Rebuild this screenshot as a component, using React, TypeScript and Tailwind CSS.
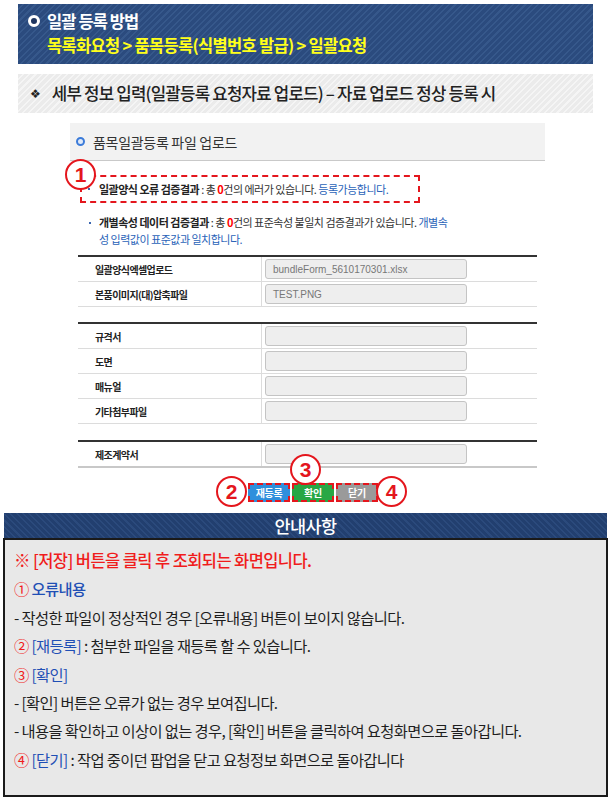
import React from "react";

function Marker({ n, className }: { n: string; className: string }) {
  return (
    <div
      className={
        "absolute w-[31px] h-[31px] rounded-full border-[2.5px] border-[#e4161d] bg-white flex items-center justify-center text-[#e4161d] text-[21px] font-bold leading-none font-['Liberation_Sans',sans-serif] " +
        className
      }
    >
      {n}
    </div>
  );
}

function Row({ label, value, last }: { label: string; value?: string; last?: boolean }) {
  return (
    <div
      className={
        last
          ? "grid grid-cols-[184px_1fr] h-[26px] border-b-2 border-[#c8c8c8]"
          : "grid grid-cols-[184px_1fr] h-[25px] border-b border-[#dcdcdc]"
      }
    >
      <div className="border-r border-[#dcdcdc] flex items-center pl-[17px] text-[10px] font-bold tracking-[-0.6px] text-[#222]">
        {label}
      </div>
      <div className="flex items-center pl-[3px]">
        <div className="w-[202px] h-[20px] rounded-[3px] border border-[#c4c4c4] bg-[#eeeeee] flex items-center pl-[7px] text-[10px] text-[#777] font-['Liberation_Sans',sans-serif]">
          {value}
        </div>
      </div>
    </div>
  );
}

function Btn({ label, className }: { label: string; className: string }) {
  return (
    <div
      className={
        "w-[42px] h-[19px] border-2 border-dashed border-[#e4161d] flex items-center justify-center text-white text-[10px] font-bold tracking-[-0.3px] leading-none " +
        className
      }
    >
      {label}
    </div>
  );
}

export default function App() {
  return (
    <div className="relative w-[611px] h-[800px] bg-white overflow-hidden font-['Noto_Sans_CJK_KR','Noto_Sans',sans-serif] text-[#222]">
      {/* top title bar */}
      <div className="ml-[18px] mt-[4px] w-[575px] h-[60px] pt-[8px] bg-[repeating-linear-gradient(135deg,#2b4b7e_0px,#2b4b7e_3px,#36588b_3px,#36588b_4.5px)]">
        <div className="flex items-center h-[18px]">
          <span className="ml-[10px] w-[12px] h-[12px] rounded-full border-[3px] border-white bg-[#1e3560]" />
          <span className="ml-[7px] text-white text-[16.5px] font-bold tracking-[-0.9px] leading-none">
            일괄 등록 방법
          </span>
        </div>
        <div className="ml-[29px] mt-[7px] text-[#ffff1a] text-[16.5px] font-bold tracking-[-0.7px] leading-[16px]">
          목록화요청 &gt; 품목등록(식별번호 발급) &gt; 일괄요청
        </div>
      </div>

      {/* gray sub bar */}
      <div className="ml-[18px] mt-[10px] w-[575px] h-[39px] flex items-center bg-[repeating-linear-gradient(135deg,#ebebeb_0px,#ebebeb_3px,#f5f5f5_3px,#f5f5f5_4.5px)]">
        <span className="ml-[12px] font-['DejaVu_Sans',sans-serif] text-[12px] leading-none text-[#222]">❖</span>
        <span className="ml-[11px] text-[16.8px] font-medium tracking-[-0.8px] leading-none text-[#222]">
          세부 정보 입력(일괄등록 요청자료 업로드) – 자료 업로드 정상 등록 시
        </span>
      </div>

      {/* panel */}
      <div className="ml-[70px] mt-[10px] w-[475px]">
        <div className="h-[38px] bg-[#f2f2f2] border-b border-[#c9c9c9] flex items-center">
          <span className="ml-[6px] w-[9px] h-[9px] rounded-full border-2 border-[#3b7bd9] bg-[#dfe9f8]" />
          <span className="ml-[8px] text-[14px] tracking-[-0.3px] text-[#333] leading-none">
            품목일괄등록 파일 업로드
          </span>
        </div>

        <div className="px-[8px]">
          <div className="ml-[2px] mt-[14px] w-[340px] h-[28px] border-2 border-dashed border-[#e4161d] flex items-center text-[11px] tracking-[-0.5px] text-[#333]">
            <span className="ml-[6px] w-[2px] h-[2px] bg-[#3a66b0] shrink-0" />
            <span className="ml-[9px]">
              <b className="text-[#222]">일괄양식 오류 검증결과</b> : 총 <b className="text-[#ff0000]">0</b>건의 에러가 있습니다.{" "}
              <span className="text-[#2a63b8]">등록가능합니다.</span>
            </span>
          </div>

          <div className="mt-[11px] flex text-[11px] leading-[17px] tracking-[-0.5px] text-[#333]">
            <span className="ml-[11px] mt-[8px] w-[2px] h-[2px] bg-[#3a66b0] shrink-0" />
            <div className="ml-[8px]">
              <b className="text-[#222]">개별속성 데이터 검증결과</b> : 총 <b className="text-[#ff0000]">0</b>건의 표준속성 불일치 검증결과가 있습니다.{" "}
              <span className="text-[#2a63b8]">개별속</span>
              <br />
              <span className="text-[#2a63b8]">성 입력값이 표준값과 일치합니다.</span>
            </div>
          </div>

          <div className="mt-[7px] border-t-2 border-[#333]">
            <Row label="일괄양식엑셀업로드" value="bundleForm_5610170301.xlsx" />
            <Row label="본품이미지(대)압축파일" value="TEST.PNG" />
          </div>

          <div className="mt-[15px] border-t-2 border-[#333]">
            <Row label="규격서" />
            <Row label="도면" />
            <Row label="매뉴얼" />
            <Row label="기타첨부파일" />
          </div>

          <div className="mt-[16px] border-t-2 border-[#333]">
            <Row label="제조계약서" last />
          </div>

          <div className="mt-[15px] flex gap-[2px] pl-[170px]">
            <Btn label="재등록" className="bg-[#2f8fdc]" />
            <Btn label="확인" className="bg-[#28a745]" />
            <Btn label="닫기" className="bg-[#9a9a9a]" />
          </div>
        </div>
      </div>

      {/* guide section */}
      <div className="ml-[4px] mt-[11px] w-[603px] h-[25px] flex items-center justify-center bg-[repeating-linear-gradient(45deg,#223f6f_0px,#223f6f_3px,#2b4a7c_3px,#2b4a7c_4.5px)]">
        <span className="text-white text-[17.5px] font-medium tracking-[-0.6px] leading-none">안내사항</span>
      </div>
      <div className="ml-[3px] w-[605px] h-[259px] border-2 border-[#1a1a1a] bg-[#e8e8e8] pl-[9px] pt-[6px] text-[15.3px] leading-[28.4px] tracking-[-0.6px] text-[#1e1e1e]">
        <div className="text-[#f01c1c] font-medium text-[16.5px]">※ [저장] 버튼을 클릭 후 조회되는 화면입니다.</div>
        <div>
          <span className="text-[#f01c1c]">①</span> <span className="text-[#1f4fb5] font-medium">오류내용</span>
        </div>
        <div>- 작성한 파일이 정상적인 경우 [오류내용] 버튼이 보이지 않습니다.</div>
        <div>
          <span className="text-[#f01c1c]">②</span> <span className="text-[#1f4fb5]">[재등록]</span> : 첨부한 파일을 재등록 할 수 있습니다.
        </div>
        <div>
          <span className="text-[#f01c1c]">③</span> <span className="text-[#1f4fb5]">[확인]</span>
        </div>
        <div>- [확인] 버튼은 오류가 없는 경우 보여집니다.</div>
        <div>- 내용을 확인하고 이상이 없는 경우, [확인] 버튼을 클릭하여 요청화면으로 돌아갑니다.</div>
        <div>
          <span className="text-[#f01c1c]">④</span> <span className="text-[#1f4fb5]">[닫기]</span> : 작업 중이던 팝업을 닫고 요청정보 화면으로 돌아갑니다
        </div>
      </div>

      {/* numbered markers */}
      <Marker n="1" className="left-[65px] top-[159px]" />
      <Marker n="2" className="left-[216px] top-[476px]" />
      <Marker n="3" className="left-[290px] top-[454px]" />
      <Marker n="4" className="left-[376px] top-[476px]" />
    </div>
  );
}
